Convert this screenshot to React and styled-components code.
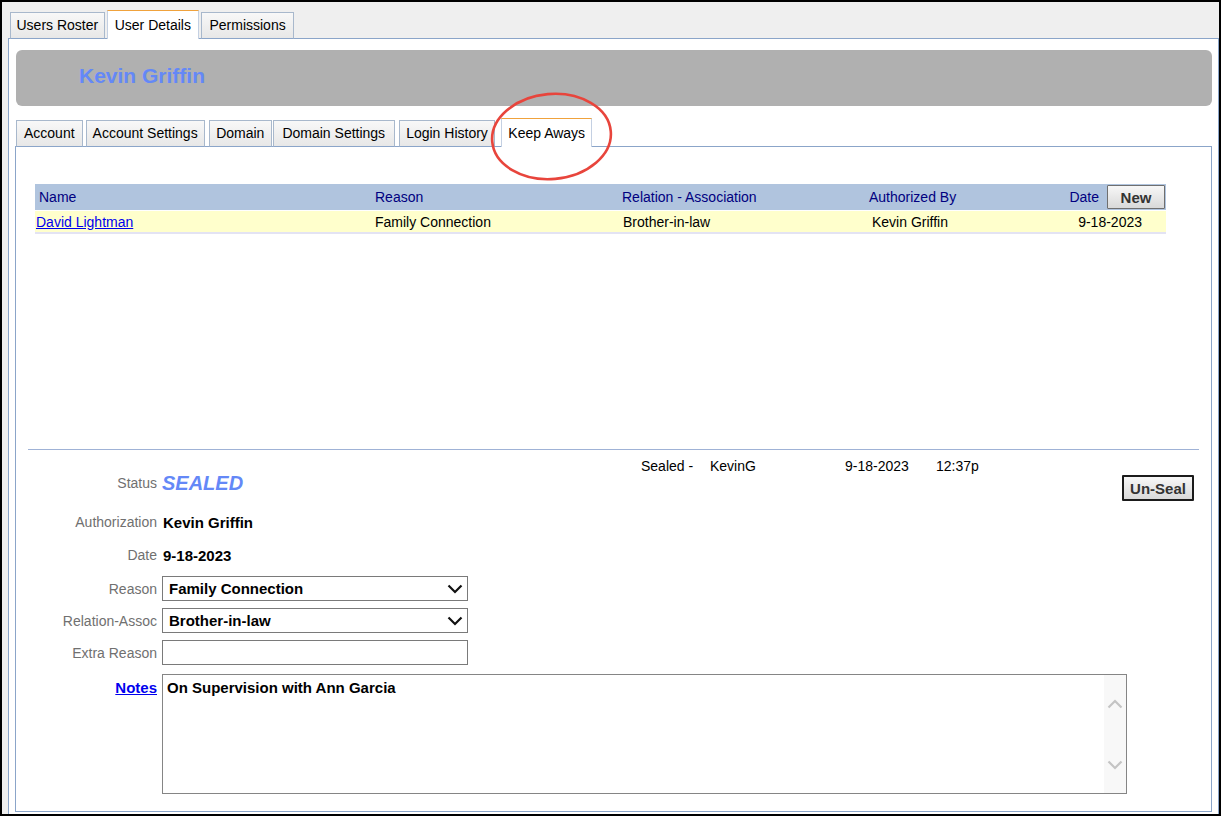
import React from "react";
import styled, { createGlobalStyle } from "styled-components";

const GlobalStyle = createGlobalStyle`
  html, body {
    margin: 0;
    padding: 0;
  }
  body {
    font-family: "Liberation Sans", Arial, sans-serif;
    font-size: 14px;
    color: #000;
  }
  * {
    box-sizing: border-box;
  }
`;

const Screen = styled.div`
  position: relative;
  width: 1221px;
  height: 816px;
  border: 2px solid #000;
  background: #efefef;
  overflow: hidden;
  display: flex;
  flex-direction: column;
`;

const TabStrip = styled.div`
  display: flex;
  align-items: flex-end;
  gap: ${(p) => p.$gap}px;
  padding: ${(p) => p.$top}px 0 0 ${(p) => p.$indent}px;
  position: relative;
  z-index: 1;
`;

const Tab = styled.div`
  height: ${(p) => (p.$active ? 29 : 27)}px;
  margin-bottom: -1px;
  margin-left: ${(p) => p.$shift || 0}px;
  padding: 0 ${(p) => p.$pad || 6}px 1px;
  display: flex;
  align-items: center;
  white-space: nowrap;
  font-size: 14px;
  color: #000;
  border: 1px solid ${(p) => (p.$active ? "#c4d0e2" : "#a8b8cc")};
  border-top-color: ${(p) => (p.$active ? "#f0a23c" : "#a8b8cc")};
  border-bottom: ${(p) => (p.$active ? "none" : "1px solid #8ba5c9")};
  background: ${(p) =>
    p.$active ? "#fff" : "linear-gradient(#f8f8f8, #e7e7e7)"};
`;

const OuterPanel = styled.div`
  flex: 1;
  margin-left: 6px;
  background: #fff;
  border: 1px solid #8ba5c9;
  border-bottom: none;
  padding: 11px 6px 0;
  display: flex;
  flex-direction: column;
`;

const NameBar = styled.div`
  height: 56px;
  margin-left: 1px;
  padding: 0 0 5px 63px;
  display: flex;
  align-items: center;
  background: #b0b0b0;
  border-radius: 6px;
`;

const NameTitle = styled.span`
  font-size: 21px;
  font-weight: bold;
  color: #6488f7;
`;

const InnerTabs = styled(TabStrip)`
  margin-top: 12px;
`;

const InnerPanel = styled.div`
  flex: 1;
  margin-bottom: 2px;
  border: 1px solid #8ba5c9;
  display: flex;
  flex-direction: column;
`;

const ListArea = styled.div`
  height: 302px;
  padding: 37px 0 0 19px;
`;

const Table = styled.div`
  width: 1131px;
`;

const HeadRow = styled.div`
  display: grid;
  grid-template-columns: 340px 247px 247px 1fr auto 59px;
  align-items: center;
  height: 26px;
  background: #b0c4de;
  color: #000080;
`;

const DataRow = styled.div`
  display: grid;
  grid-template-columns: 340px 247px 247px 1fr auto;
  align-items: center;
  height: 23px;
  margin-top: 1px;
  background: #ffffcc;
  border-bottom: 2px solid #e3e3f3;
`;

const Cell = styled.div`
  padding-left: ${(p) => p.$left || 0}px;
  padding-right: ${(p) => p.$right || 0}px;
  white-space: nowrap;
`;

const NameLink = styled.a`
  color: #0000ee;
  text-decoration: underline;
  cursor: pointer;
`;

const GrayButton = styled.button`
  width: ${(p) => p.$w}px;
  height: ${(p) => p.$h}px;
  padding: 0;
  font-family: "Liberation Sans", Arial, sans-serif;
  font-size: 15px;
  font-weight: bold;
  color: #333;
  background: linear-gradient(#f7f7f7, #d9d9d9);
  border: ${(p) => (p.$heavy ? "2px solid #1b1b1b" : "1px solid #6f6f6f")};
  border-radius: 1px;
  cursor: pointer;
`;

const Separator = styled.div`
  height: 1px;
  margin: 0 12px;
  background: #9fb2d6;
`;

const Details = styled.div`
  padding: 8px 17px 0 0;
`;

const TopRow = styled.div`
  display: flex;
  align-items: flex-start;
`;

const LeftFields = styled.div`
  width: 625px;
`;

const Field = styled.div`
  display: grid;
  grid-template-columns: 141px auto;
  column-gap: 5px;
  align-items: ${(p) => (p.$top ? "start" : "center")};
  height: ${(p) => p.$h || 24}px;
  margin-top: ${(p) => p.$mt}px;
`;

const Label = styled.div`
  text-align: right;
  color: #707070;
  white-space: nowrap;
`;

const NotesLabel = styled.a`
  justify-self: end;
  padding-top: 6px;
  line-height: 16px;
  font-size: 15px;
  font-weight: bold;
  color: #0000ee;
  text-decoration: underline;
  cursor: pointer;
`;

const Value = styled.div`
  padding-left: 1px;
  font-size: 15px;
  font-weight: bold;
  white-space: nowrap;
`;

const StatusValue = styled.div`
  font-size: 20px;
  font-weight: bold;
  font-style: italic;
  color: #6488f7;
`;

const SealInfo = styled.div`
  flex: 1;
  display: flex;
  flex-direction: column;
`;

const SealLine = styled.div`
  display: grid;
  grid-template-columns: 69px 135px 91px auto;
  line-height: 16px;
`;

const ButtonRow = styled.div`
  display: flex;
  justify-content: flex-end;
  margin-top: 1px;
`;

const Dropdown = styled.div`
  width: 306px;
  height: 25px;
  padding: 0 4px 0 6px;
  display: flex;
  align-items: center;
  justify-content: space-between;
  border: 1px solid #7a7a7a;
  font-size: 15px;
  font-weight: bold;
`;

const TextBox = styled.div`
  width: 306px;
  height: 25px;
  border: 1px solid #7a7a7a;
`;

const NotesBox = styled.div`
  width: 965px;
  height: 120px;
  display: flex;
  border: 1px solid #858585;
`;

const NotesText = styled.div`
  flex: 1;
  padding: 5px 4px;
  line-height: 16px;
  font-size: 15px;
  font-weight: bold;
`;

const ScrollTrack = styled.div`
  width: 22px;
  padding: 24px 0 23px;
  display: flex;
  flex-direction: column;
  justify-content: space-between;
  align-items: center;
  background: #f8f8f8;
`;

const Ring = styled.svg`
  position: absolute;
  left: 485px;
  top: 87px;
  z-index: 5;
  pointer-events: none;
`;

const Chevron = ({ up, color = "#111", w = 16, h = 10, sw = 2.2 }) => (
  <svg width={w} height={h} viewBox="0 0 16 10">
    <path
      d={up ? "M1.5 8.5 L8 2 L14.5 8.5" : "M1.5 1.5 L8 8 L14.5 1.5"}
      fill="none"
      stroke={color}
      strokeWidth={sw}
    />
  </svg>
);

const topTabs = [
  { label: "Users Roster", pad: 5.5 },
  { label: "User Details", pad: 7, active: true },
  { label: "Permissions", pad: 7.5 },
];

const detailTabs = [
  { label: "Account", pad: 7 },
  { label: "Account Settings", pad: 6, shift: -1 },
  { label: "Domain", pad: 6.5 },
  { label: "Domain Settings", pad: 8.5, shift: -3 },
  { label: "Login History", pad: 6.5 },
  { label: "Keep Aways", active: true, pad: 6, shift: 2 },
];

const keepAways = [
  {
    name: "David Lightman",
    reason: "Family Connection",
    relation: "Brother-in-law",
    by: "Kevin Griffin",
    date: "9-18-2023",
  },
];

export default function App() {
  return (
    <>
      <GlobalStyle />
      <Screen>
        <TabStrip $gap={2} $top={8} $indent={8}>
          {topTabs.map((t) => (
            <Tab key={t.label} $active={t.active} $pad={t.pad}>
              {t.label}
            </Tab>
          ))}
        </TabStrip>

        <OuterPanel>
          <NameBar>
            <NameTitle>Kevin Griffin</NameTitle>
          </NameBar>

          <InnerTabs $gap={4} $top={0} $indent={1}>
            {detailTabs.map((t) => (
              <Tab
                key={t.label}
                $active={t.active}
                $pad={t.pad}
                $shift={t.shift}
              >
                {t.label}
              </Tab>
            ))}
          </InnerTabs>

          <InnerPanel>
            <ListArea>
              <Table>
                <HeadRow>
                  <Cell $left={4}>Name</Cell>
                  <Cell>Reason</Cell>
                  <Cell>Relation - Association</Cell>
                  <Cell>Authorized By</Cell>
                  <Cell $right={8}>Date</Cell>
                  <GrayButton $w={58} $h={24}>
                    New
                  </GrayButton>
                </HeadRow>
                {keepAways.map((k) => (
                  <DataRow key={k.name}>
                    <Cell $left={1}>
                      <NameLink>{k.name}</NameLink>
                    </Cell>
                    <Cell>{k.reason}</Cell>
                    <Cell $left={1}>{k.relation}</Cell>
                    <Cell $left={3}>{k.by}</Cell>
                    <Cell $right={24}>{k.date}</Cell>
                  </DataRow>
                ))}
              </Table>
            </ListArea>

            <Separator />

            <Details>
              <TopRow>
                <LeftFields>
                  <Field $mt={13}>
                    <Label>Status</Label>
                    <StatusValue>SEALED</StatusValue>
                  </Field>
                  <Field $mt={15}>
                    <Label>Authorization</Label>
                    <Value>Kevin Griffin</Value>
                  </Field>
                  <Field $mt={9}>
                    <Label>Date</Label>
                    <Value>9-18-2023</Value>
                  </Field>
                </LeftFields>
                <SealInfo>
                  <SealLine>
                    <span>Sealed -</span>
                    <span>KevinG</span>
                    <span>9-18-2023</span>
                    <span>12:37p</span>
                  </SealLine>
                  <ButtonRow>
                    <GrayButton $w={72} $h={26} $heavy>
                      Un-Seal
                    </GrayButton>
                  </ButtonRow>
                </SealInfo>
              </TopRow>

              <Field $mt={9} $h={25}>
                <Label>Reason</Label>
                <Dropdown>
                  Family Connection
                  <Chevron />
                </Dropdown>
              </Field>
              <Field $mt={7} $h={25}>
                <Label>Relation-Assoc</Label>
                <Dropdown>
                  Brother-in-law
                  <Chevron />
                </Dropdown>
              </Field>
              <Field $mt={7} $h={25}>
                <Label>Extra Reason</Label>
                <TextBox />
              </Field>
              <Field $mt={9} $h={120} $top>
                <NotesLabel>Notes</NotesLabel>
                <NotesBox>
                  <NotesText>On Supervision with Ann Garcia</NotesText>
                  <ScrollTrack>
                    <Chevron up color="#c4c4c4" />
                    <Chevron color="#c4c4c4" />
                  </ScrollTrack>
                </NotesBox>
              </Field>
            </Details>
          </InnerPanel>
        </OuterPanel>

        <Ring width="130" height="96" viewBox="0 0 130 96">
          <ellipse
            cx="64.5"
            cy="47.5"
            rx="59.5"
            ry="42.5"
            fill="none"
            stroke="#e8453c"
            strokeWidth="2.6"
            transform="rotate(-5 64.5 47.5)"
          />
        </Ring>
      </Screen>
    </>
  );
}
